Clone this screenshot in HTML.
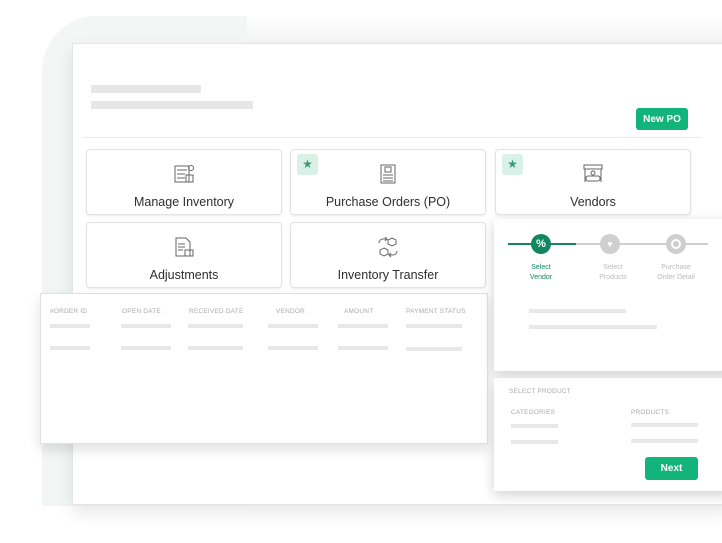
<!DOCTYPE html>
<html><head><meta charset="utf-8"><style>
*{margin:0;padding:0;box-sizing:border-box}
body{width:722px;height:543px;overflow:hidden;background:#fff;position:relative;font-family:"Liberation Sans",sans-serif}
.abs{position:absolute}
.bar{position:absolute;background:#e8e8e8;height:5px}
.card{position:absolute;background:#fff;border:1px solid #e2e2e2;border-radius:4px;box-shadow:0 1px 2px rgba(0,0,0,.08);text-align:center;color:#2e2e2e;font-size:12.5px}
.card .lbl{position:absolute;left:0;right:0;top:45px}
.card svg{position:absolute;left:50%;top:13px;margin-left:-11px}
.star{position:absolute;left:6px;top:4px;width:21px;height:21px;background:#d9f1e7;border-radius:3px;color:#3d9a76;font-size:12px;line-height:21px;text-align:center}
.th{position:absolute;top:14px;font-size:6.5px;color:#aaa;letter-spacing:.2px}
.btn{position:absolute;background:#12b47c;color:#fff;font-weight:bold;font-size:10px;border-radius:3px;display:flex;align-items:center;justify-content:center}
.step{position:absolute;font-size:7px;text-align:center;line-height:10px;width:60px}
</style></head><body>
<div class="abs" style="left:42px;top:16px;width:205px;height:490px;background:#f2f6f5;border-radius:55px 0 0 0"></div>
<div class="abs" style="left:247px;top:16px;width:475px;height:28px;background:linear-gradient(#fff,#f3f3f3)"></div>
<div class="abs" style="left:72px;top:43px;width:660px;height:462px;background:#fff;border:1px solid #e6e6e6;box-shadow:0 8px 16px rgba(0,0,0,.09)"></div>
<div class="bar" style="left:91px;top:85px;width:110px;height:8px;background:#e6e6e6"></div>
<div class="bar" style="left:91px;top:101px;width:162px;height:8px;background:#e6e6e6"></div>
<div class="btn" style="left:636px;top:108px;width:52px;height:22px">New PO</div>
<div class="abs" style="left:82px;top:137px;width:620px;height:1px;background:#ececec"></div>

<div class="card" style="left:86px;top:149px;width:196px;height:66px">
<svg width="22" height="22" viewBox="0 0 22 22" fill="none" stroke="#666" stroke-width="1"><rect x="2" y="3" width="14" height="16"/><line x1="4" y1="7" x2="14" y2="7"/><line x1="4" y1="11" x2="12" y2="11"/><line x1="4" y1="15" x2="12" y2="15"/><rect x="13" y="12" width="7" height="7"/><circle cx="18" cy="5" r="2.5"/></svg>
<div class="lbl">Manage Inventory</div></div>
<div class="card" style="left:290px;top:149px;width:196px;height:66px"><div class="star">★</div>
<svg width="22" height="22" viewBox="0 0 22 22" fill="none" stroke="#666" stroke-width="1"><rect x="4" y="2" width="14" height="18"/><rect x="8" y="4" width="6" height="5"/><line x1="6" y1="12" x2="16" y2="12"/><line x1="6" y1="15" x2="16" y2="15"/><line x1="6" y1="18" x2="16" y2="18"/></svg>
<div class="lbl">Purchase Orders (PO)</div></div>
<div class="card" style="left:495px;top:149px;width:196px;height:66px"><div class="star">★</div>
<svg width="22" height="22" viewBox="0 0 22 22" fill="none" stroke="#666" stroke-width="1"><rect x="2" y="2" width="18" height="4"/><line x1="3" y1="6" x2="3" y2="19"/><line x1="19" y1="6" x2="19" y2="19"/><circle cx="11" cy="10" r="2"/><rect x="4" y="13" width="14" height="5" rx="2"/></svg>
<div class="lbl">Vendors</div></div>
<div class="card" style="left:86px;top:222px;width:196px;height:66px">
<svg width="22" height="22" viewBox="0 0 22 22" fill="none" stroke="#666" stroke-width="1"><path d="M3 2h10l4 4v14H3z"/><line x1="5" y1="8" x2="12" y2="8"/><line x1="5" y1="11" x2="12" y2="11"/><line x1="5" y1="14" x2="10" y2="14"/><rect x="12" y="14" width="8" height="6"/></svg>
<div class="lbl">Adjustments</div></div>
<div class="card" style="left:290px;top:222px;width:196px;height:66px">
<svg width="22" height="22" viewBox="0 0 22 22" fill="none" stroke="#666" stroke-width="1"><path d="M2 7a4 4 0 0 1 4-4h4l-2-2M10 3l-2 2"/><path d="M15 2l4 2v4l-4 2-4-2V4z"/><path d="M7 12l4 2v4l-4 2-4-2v-4z"/><path d="M20 15a4 4 0 0 1-4 4h-4l2 2M12 19l2-2"/></svg>
<div class="lbl">Inventory Transfer</div></div>

<div class="abs" style="left:40px;top:293px;width:448px;height:151px;background:#fff;border:1px solid #e0e0e0;box-shadow:0 6px 12px rgba(0,0,0,.12)">
<div class="th" style="left:9px">#ORDER ID</div><div class="th" style="left:81px">OPEN DATE</div><div class="th" style="left:148px">RECEIVED DATE</div><div class="th" style="left:235px">VENDOR</div><div class="th" style="left:303px">AMOUNT</div><div class="th" style="left:365px">PAYMENT STATUS</div>
<div class="bar" style="left:9px;top:30px;width:40px;height:4px"></div><div class="bar" style="left:80px;top:30px;width:50px;height:4px"></div><div class="bar" style="left:147px;top:30px;width:55px;height:4px"></div><div class="bar" style="left:227px;top:30px;width:50px;height:4px"></div><div class="bar" style="left:297px;top:30px;width:50px;height:4px"></div><div class="bar" style="left:365px;top:30px;width:56px;height:4px"></div>
<div class="bar" style="left:9px;top:52px;width:40px;height:4px"></div><div class="bar" style="left:80px;top:52px;width:50px;height:4px"></div><div class="bar" style="left:147px;top:52px;width:55px;height:4px"></div><div class="bar" style="left:227px;top:52px;width:50px;height:4px"></div><div class="bar" style="left:297px;top:52px;width:50px;height:4px"></div><div class="bar" style="left:365px;top:53px;width:56px;height:4px"></div>
</div>

<div class="abs" style="left:494px;top:219px;width:240px;height:152px;background:#fff;box-shadow:0 4px 12px rgba(0,0,0,.18)">
<div class="abs" style="left:14px;top:24px;width:68px;height:2px;background:#12875f"></div>
<div class="abs" style="left:82px;top:24px;width:132px;height:2px;background:#cfcfcf"></div>
<div class="abs" style="left:37px;top:15px;width:20px;height:20px;border-radius:50%;background:#12875f;color:#fff;font-size:11px;font-weight:bold;text-align:center;line-height:20px">%</div>
<div class="abs" style="left:106px;top:15px;width:20px;height:20px;border-radius:50%;background:#cfcfcf;color:#fff;font-size:9px;text-align:center;line-height:20px">♥</div>
<div class="abs" style="left:172px;top:15px;width:20px;height:20px;border-radius:50%;background:#cfcfcf"><div style="margin:5px;width:10px;height:10px;border:2px solid #fff;border-radius:50%"></div></div>
<div class="step" style="left:17px;top:44px;color:#12875f">Select<br>Vendor</div>
<div class="step" style="left:89px;top:44px;color:#bbb">Select<br>Products</div>
<div class="step" style="left:152px;top:44px;color:#bbb">Purchase<br>Order Detail</div>
<div class="bar" style="left:35px;top:90px;width:97px;height:4px"></div>
<div class="bar" style="left:35px;top:106px;width:128px;height:4px"></div>
</div>
<div class="abs" style="left:494px;top:378px;width:240px;height:113px;background:#fff;box-shadow:0 4px 12px rgba(0,0,0,.18)">
<div class="th" style="left:15px;top:10px">SELECT PRODUCT</div>
<div class="th" style="left:17px;top:31px">CATEGORIES</div>
<div class="th" style="left:137px;top:31px">PRODUCTS</div>
<div class="bar" style="left:17px;top:46px;width:47px;height:4px"></div>
<div class="bar" style="left:17px;top:62px;width:47px;height:4px"></div>
<div class="bar" style="left:137px;top:45px;width:67px;height:4px"></div>
<div class="bar" style="left:137px;top:61px;width:67px;height:4px"></div>
<div class="btn" style="left:151px;top:79px;width:53px;height:23px">Next</div>
</div>
</body></html>
